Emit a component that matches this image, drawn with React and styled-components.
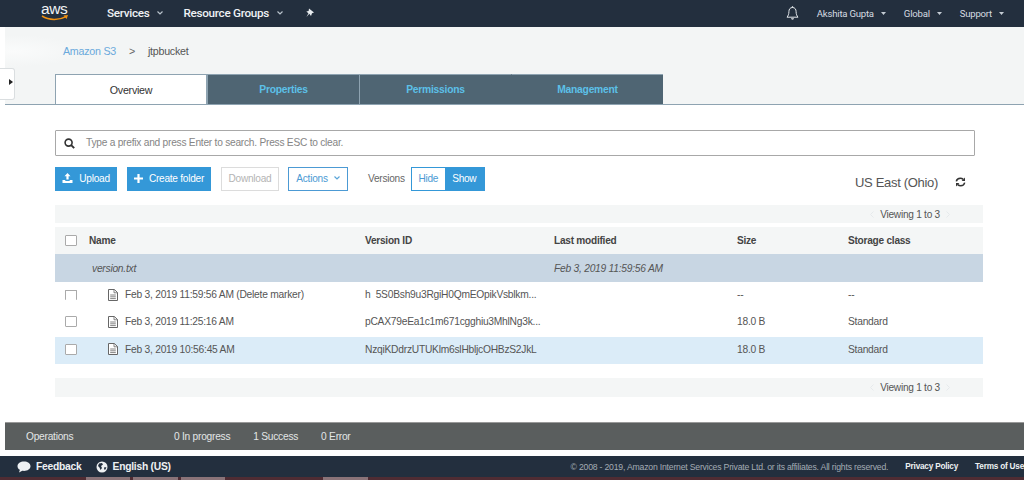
import React from "react";
import styled, { createGlobalStyle } from "styled-components";

const GlobalStyle = createGlobalStyle`
	html, body {
		margin: 0;
		padding: 0;
		background: #fff;
	}
	body {
		font-family: "Liberation Sans", Arial, sans-serif;
		font-size: 10px;
		color: #444;
	}
	/* the source text is narrow for its height, keep that look everywhere */
	* {
		letter-spacing: -0.024em;
	}
`;

const Caret = () => (
	<svg width="5" height="3" viewBox="0 0 5 3">
		<path d="M0 0h5L2.500 3z" fill="#c4ccd4" />
	</svg>
);

const Chevron = ({ color = "#8a98a3" }) => (
	<svg width="6" height="4" viewBox="0 0 6 4">
		<path d="M.5 .5L3 3 5.500 .5" stroke={color} strokeWidth="1.200" fill="none" />
	</svg>
);

const AwsLogo = () => (
	<LogoWrap>
		<LogoText>aws</LogoText>
		<LogoSmile width="28" height="7" viewBox="0 0 28 7">
			<path d="M1 1c7 4.500 17 4.500 24 .6" stroke="#f29111" strokeWidth="1.500" fill="none" />
			<path d="M22.500 .5l4.500-.4-1.400 4z" fill="#f29111" />
		</LogoSmile>
	</LogoWrap>
);

const Pin = () => (
	<svg width="10" height="10" viewBox="0 0 10 10">
		<path d="M4 .5l5 4-2 .7-1 2.800-1.700-2.200L1.500 9 3.400 5.200 1.300 3.600l2.300-.5z" fill="#e8ecef" />
	</svg>
);

const Bell = () => (
	<svg width="13" height="15" viewBox="0 0 13 15">
		<path d="M6.500 1.500c-2.500 0-3.600 1.900-3.600 4.200 0 2.400-.7 4-1.900 5.500h11c-1.200-1.500-1.900-3.100-1.900-5.500 0-2.300-1.100-4.200-3.600-4.200z" stroke="#e4e8ec" strokeWidth="1" fill="none" />
		<path d="M5 12.300h3c0 1.900-3 1.900-3 0z" fill="#e4e8ec" />
		<rect x="5.900" y=".2" width="1.200" height="1.500" fill="#e4e8ec" />
	</svg>
);

const SearchIcon = () => (
	<svg width="11" height="11" viewBox="0 0 11 11">
		<circle cx="4.600" cy="4.600" r="3.500" stroke="#333" strokeWidth="1.600" fill="none" />
		<path d="M7.200 7.200l3 3" stroke="#333" strokeWidth="1.900" />
	</svg>
);

const UploadIcon = () => (
	<svg width="11" height="10" viewBox="0 0 11 10">
		<path d="M5.500 0l3 3.200H6.600v3.300H4.400V3.200H2.500z" fill="#fff" />
		<path d="M.5 7h2.800v1h4.400V7h2.800v3H.5z" fill="#fff" />
	</svg>
);

const PlusIcon = () => (
	<svg width="9" height="9" viewBox="0 0 9 9">
		<path d="M3.400 0h2.200v3.400H9v2.200H5.600V9H3.400V5.600H0V3.400h3.400z" fill="#fff" />
	</svg>
);

const RefreshIcon = () => (
	<svg width="11" height="10" viewBox="0 0 11 10">
		<path d="M1.300 4.300C1.700 2.400 3.300 1.200 5.300 1.200c1.200 0 2.200.5 3 1.200" stroke="#333" strokeWidth="1.500" fill="none" />
		<path d="M10 .4v3.500H6.600z" fill="#333" />
		<path d="M9.700 5.700c-.4 1.900-2 3.100-4 3.100-1.200 0-2.200-.5-3-1.200" stroke="#333" strokeWidth="1.500" fill="none" />
		<path d="M1 9.600V6.100h3.400z" fill="#333" />
	</svg>
);

const FileIcon = () => (
	<svg width="10" height="12" viewBox="0 0 10 12">
		<path d="M.5 .5h5.800l3.200 3v8H.5z" stroke="#666" strokeWidth="1" fill="#fff" />
		<path d="M6 .5v3.300h3.500M2.200 6h5.600M2.200 7.800h5.600M2.200 9.600h5.600" stroke="#666" strokeWidth=".8" fill="none" />
	</svg>
);

const Bubble = () => (
	<svg width="14" height="12" viewBox="0 0 14 12">
		<path d="M7 .5c3.600 0 6.500 2 6.500 4.700S10.600 9.900 7 9.900c-.6 0-1.100 0-1.700-.1L2 11.500l.9-2.700C1.300 8 .5 6.700.5 5.200.5 2.500 3.400.5 7 .5z" fill="#eef1f3" />
	</svg>
);

const Globe = () => (
	<svg width="12" height="12" viewBox="0 0 12 12">
		<circle cx="6" cy="6" r="5.500" fill="#eef1f3" />
		<path d="M3 2.500l3-.5 1 1.500-2 1.500 1 2-1.500 2L3.500 6.500 2 5zM8.500 6l2 .5-1.500 2.500-1-1z" fill="#232f3e" />
	</svg>
);

const PagerArrow = ({ right }) => (
	<svg width="4" height="7" viewBox="0 0 4 7">
		<path d={right ? "M.5 .5l3 3-3 3" : "M3.500 .5l-3 3 3 3"} stroke="#e6eaec" strokeWidth="1" fill="none" />
	</svg>
);

const rows = [
	{ date: "Feb 3, 2019 11:59:56 AM (Delete marker)", version: "h  5S0Bsh9u3RgiH0QmEOpikVsblkm...", size: "--", storage: "--", cut: true },
	{ date: "Feb 3, 2019 11:25:16 AM", version: "pCAX79eEa1c1m671cgghiu3MhlNg3k...", size: "18.0 B", storage: "Standard" },
	{ date: "Feb 3, 2019 10:56:45 AM", version: "NzqiKDdrzUTUKlm6slHbljcOHBzS2JkL", size: "18.0 B", storage: "Standard", selected: true },
];

const App = () => {
	return (
		<>
			<GlobalStyle />
			<Page>
				<TopBar>
					<AwsLogo />
					<NavItem $bold $left={24}>Services <Chevron color="#b8c2cb" /></NavItem>
					<NavItem $bold $left={20}>Resource Groups <Chevron color="#b8c2cb" /></NavItem>
					<PinSlot><Pin /></PinSlot>
					<NavRight>
						<Bell />
						<NavItem $left={18}>Akshita Gupta <Caret /></NavItem>
						<NavItem $left={18}>Global <Caret /></NavItem>
						<NavItem $left={18}>Support <Caret /></NavItem>
					</NavRight>
				</TopBar>
				<Body>
					<Rail>
						<RailTab />
					</Rail>
					<Main>
						<Hero>
							<Crumbs>
								<CrumbLink>Amazon S3</CrumbLink>
								<CrumbSep>&gt;</CrumbSep>
								<span>jtpbucket</span>
							</Crumbs>
							<Tabs>
								<Tab $active>Overview</Tab>
								<Tab>Properties</Tab>
								<Tab>Permissions</Tab>
								<Tab $flush>Management</Tab>
							</Tabs>
						</Hero>
						<Content>
							<SearchBox>
								<SearchIcon />
								<SearchHint>Type a prefix and press Enter to search. Press ESC to clear.</SearchHint>
							</SearchBox>
							<Toolbar>
								<Button $primary $w={62}><UploadIcon /> Upload</Button>
								<Button $primary $w={84}><PlusIcon /> Create folder</Button>
								<Button $disabled $w={58}>Download</Button>
								<Button $outline $w={60} $pull>Actions <Chevron color="#5aa5d8" /></Button>
								<VersionsLabel>Versions</VersionsLabel>
								<Toggle>
									<ToggleSide>Hide</ToggleSide>
									<ToggleSide $on>Show</ToggleSide>
								</Toggle>
								<Region>US East (Ohio)</Region>
								<RefreshSlot><RefreshIcon /></RefreshSlot>
							</Toolbar>
							<Pager>
								<PagerArrow />
								Viewing 1 to 3
								<PagerArrow right />
							</Pager>
							<HeadRow>
								<CheckCell><Check /></CheckCell>
								<NameCell>Name</NameCell>
								<VersionCell>Version ID</VersionCell>
								<ModifiedCell>Last modified</ModifiedCell>
								<SizeCell>Size</SizeCell>
								<StorageCell>Storage class</StorageCell>
							</HeadRow>
							<ObjectRow>
								<CheckCell />
								<NameCell $object>version.txt</NameCell>
								<VersionCell />
								<ModifiedCell>Feb 3, 2019 11:59:56 AM</ModifiedCell>
							</ObjectRow>
							{rows.map((r) => (
								<VersionRow key={r.version} $selected={r.selected}>
									<CheckCell><Check $cut={r.cut} /></CheckCell>
									<NameCell $indent>
										<FileIcon />
										{r.date}
									</NameCell>
									<VersionCell>{r.version}</VersionCell>
									<ModifiedCell />
									<SizeCell>{r.size}</SizeCell>
									<StorageCell>{r.storage}</StorageCell>
								</VersionRow>
							))}
							<Pager $bottom>
								<PagerArrow />
								Viewing 1 to 3
								<PagerArrow right />
							</Pager>
						</Content>
						<Operations>
							<OpsTitle>Operations</OpsTitle>
							<OpsStat>0 In progress</OpsStat>
							<OpsStat>1 Success</OpsStat>
							<OpsStat>0 Error</OpsStat>
						</Operations>
					</Main>
				</Body>
				<Footer>
					<FootLink $first><Bubble /> Feedback</FootLink>
					<FootLink><Globe /> English (US)</FootLink>
					<Legal>© 2008 - 2019, Amazon Internet Services Private Ltd. or its affiliates. All rights reserved.</Legal>
					<FootPolicy>Privacy Policy</FootPolicy>
					<FootPolicy>Terms of Use</FootPolicy>
				</Footer>
				<Taskbar>
					<TaskChip $w={44} $ml={86} />
					<TaskChip $w={45} $ml={3} />
					<TaskChip $w={44} $ml={3} />
					<TaskChip $w={45} $ml={98} />
				</Taskbar>
			</Page>
		</>
	);
};

const Page = styled.div`
	width: 1024px;
	height: 480px;
	overflow: hidden;
	display: flex;
	flex-direction: column;
	background: #fff;
`;
const TopBar = styled.header`
	height: 27px;
	flex: none;
	display: flex;
	align-items: center;
	background: #232f3e;
	padding-left: 41px;
	font-family: "Roboto", "Liberation Sans", sans-serif;
`;
const LogoWrap = styled.div`
	width: 42px;
	height: 27px;
	display: flex;
	flex-direction: column;
`;
const LogoText = styled.span`
	font: 15.5px/18px "Liberation Sans", sans-serif;
	color: #f1f3f5;
	letter-spacing: -0.4px;
`;
const LogoSmile = styled.svg`
	margin-top: -3px;
`;
const NavItem = styled.span`
	display: inline-flex;
	align-items: center;
	gap: ${(p) => (p.$bold ? "8px" : "7px")};
	margin-left: ${(p) => p.$left}px;
	margin-bottom: ${(p) => (p.$bold ? "2px" : "0")};
	font-size: ${(p) => (p.$bold ? "11.7px" : "9.6px")};
	font-weight: ${(p) => (p.$bold ? 500 : 400)};
	color: ${(p) => (p.$bold ? "#eef1f4" : "#d5dbe1")};
	white-space: nowrap;
`;
const PinSlot = styled.span`
	margin-left: 22px;
	margin-bottom: 2px;
	display: flex;
`;
const NavRight = styled.div`
	margin-left: auto;
	padding-right: 20px;
	display: flex;
	align-items: center;
`;
const Body = styled.div`
	height: 423px;
	flex: none;
	display: flex;
`;
const Rail = styled.div`
	width: 5px;
	flex: none;
	box-sizing: border-box;
	background: #fff;
	position: relative;
`;
const RailTab = styled.div`
	position: absolute;
	top: 41px;
	left: 0;
	width: 15px;
	height: 32px;
	box-sizing: border-box;
	background: #fff;
	border: 1px solid #dadee0;
	border-left: 0;
	border-radius: 0 3px 3px 0;
	z-index: 2;

	&::after {
		content: "";
		position: absolute;
		left: 9px;
		top: 10px;
		border-left: 4px solid #222;
		border-top: 3px solid transparent;
		border-bottom: 3px solid transparent;
	}
`;
const Main = styled.div`
	flex: 1;
	min-width: 0;
	display: flex;
	flex-direction: column;
`;
const Hero = styled.div`
	height: 78px;
	flex: none;
	box-sizing: border-box;
	padding-left: 50px;
	background: radial-gradient(ellipse 70px 16px at 8px 24px, #fafbfb, #f3f5f5);
	border-bottom: 1px solid #8ea3b1;
	display: flex;
	flex-direction: column;
`;
const Crumbs = styled.div`
	height: 48px;
	box-sizing: border-box;
	padding: 18px 0 0 8px;
	display: flex;
	font-size: 10.7px;
	line-height: 12px;
	color: #555;
`;
const CrumbLink = styled.span`
	color: #6aa9dc;
`;
const CrumbSep = styled.span`
	margin: 0 13px;
	color: #666;
`;
const Tabs = styled.div`
	display: flex;
	height: 30px;
`;
const Tab = styled.div`
	width: 152px;
	height: 30px;
	box-sizing: border-box;
	display: flex;
	align-items: center;
	justify-content: center;
	font-size: ${(p) => (p.$active ? "10.7px" : "10.300px")};
	font-weight: ${(p) => (p.$active ? 400 : 700)};
	color: ${(p) => (p.$active ? "#333" : "#5cc0e8")};
	background: ${(p) => (p.$active ? "#fff" : "#4f6573")};
	border-top: 1px solid #8ea3b1;
	border-left: 1px solid ${(p) => (p.$flush ? "#4f6573" : "#8ea3b1")};
	border-right: ${(p) => (p.$active ? "1px solid #8ea3b1" : "0")};
`;
const Content = styled.div`
	flex: 1;
	min-height: 0;
	box-sizing: border-box;
	padding: 25px 41px 0 50px;
	background: #fff;
`;
const SearchBox = styled.div`
	width: 920px;
	height: 26px;
	box-sizing: border-box;
	border: 1px solid #a8a8a8;
	border-radius: 1px;
	display: flex;
	align-items: center;
	padding-left: 8px;
`;
const SearchHint = styled.span`
	margin-left: 11px;
	margin-bottom: 2px;
	font-size: 10.2px;
	color: #858585;
`;
const Toolbar = styled.div`
	margin-top: 11px;
	height: 24px;
	width: 922px;
	display: flex;
	align-items: center;
	gap: 10px;
`;
const Button = styled.div`
	width: ${(p) => p.$w}px;
	height: 24px;
	margin-left: ${(p) => (p.$pull ? "-1px" : "0")};
	padding-bottom: 2px;
	box-sizing: border-box;
	display: flex;
	align-items: center;
	justify-content: center;
	gap: 6px;
	font-size: 10.1px;
	color: ${(p) => (p.$primary ? "#fff" : p.$disabled ? "#b4b4b4" : "#4c9ad4")};
	background: ${(p) => (p.$primary ? "#3498d8" : "#fff")};
	border: 1px solid ${(p) => (p.$primary ? "#3498d8" : p.$disabled ? "#dcdcdc" : "#4c9ad4")};
`;
const VersionsLabel = styled.span`
	margin-left: 10px;
	margin-right: -4px;
	margin-bottom: 2px;
	font-size: 10.1px;
	color: #666;
`;
const Toggle = styled.div`
	display: flex;
	height: 24px;
	width: 74px;
	box-sizing: border-box;
	border: 1px solid #3498d8;
`;
const ToggleSide = styled.div`
	flex: ${(p) => (p.$on ? "0 0 39px" : "0 0 33px")};
	padding-bottom: 2px;
	box-sizing: border-box;
	display: flex;
	align-items: center;
	justify-content: center;
	font-size: 10.1px;
	color: ${(p) => (p.$on ? "#fff" : "#4c9ad4")};
	background: ${(p) => (p.$on ? "#3498d8" : "#fff")};
`;
const Region = styled.span`
	margin-left: auto;
	padding-top: 6px;
	font-size: 13px;
	color: #555;
`;
const RefreshSlot = styled.span`
	margin-left: 7px;
	width: 22px;
	display: flex;
	padding-top: 6px;
`;
const Pager = styled.div`
	width: 928px;
	height: ${(p) => (p.$bottom ? "19px" : "18px")};
	margin-top: 14px;
	box-sizing: border-box;
	padding-right: 33px;
	display: flex;
	align-items: center;
	justify-content: flex-end;
	gap: 6px;
	background: #f4f6f6;
	font-size: 10.1px;
	color: #555;
`;
const Row = styled.div`
	width: 928px;
	display: flex;
	align-items: center;
	font-size: 10.25px;
`;
const HeadRow = styled(Row)`
	height: 27px;
	margin-top: 4px;
	background: #f4f6f6;
	font-weight: 700;
	font-size: 10.1px;
	color: #444;
`;
const ObjectRow = styled(Row)`
	height: 28px;
	background: #c8d6e3;
	font-style: italic;
	color: #555;
`;
const CheckCell = styled.div`
	width: 34px;
	flex: none;
	display: flex;
	padding-left: 10px;
	box-sizing: border-box;
`;
const VersionRow = styled(Row)`
	height: 27.330px;
	padding-bottom: 2px;
	box-sizing: border-box;
	background: ${(p) => (p.$selected ? "#dbecf8" : "#fff")};
	color: #555;

	${CheckCell} {
		margin-bottom: 0;
	}
`;
const Check = styled.span`
	width: 12px;
	height: ${(p) => (p.$cut ? "10px" : "11px")};
	box-sizing: border-box;
	border: 1px solid #aaa;
	border-bottom-width: ${(p) => (p.$cut ? "0" : "1px")};
	border-radius: 1px;
	background: #fff;
`;
const NameCell = styled.div`
	width: 276px;
	flex: none;
	box-sizing: border-box;
	padding-left: ${(p) => (p.$indent ? "19px" : p.$object ? "3px" : "0")};
	display: flex;
	align-items: center;
	gap: 7px;
	white-space: nowrap;
`;
const VersionCell = styled.div`
	width: 189px;
	flex: none;
	white-space: pre;
`;
const ModifiedCell = styled.div`
	width: 183px;
	flex: none;
	white-space: nowrap;
`;
const SizeCell = styled.div`
	width: 111px;
	flex: none;
`;
const StorageCell = styled.div`
	flex: 1;
`;
const Operations = styled.div`
	height: 28px;
	flex: none;
	box-sizing: border-box;
	display: flex;
	align-items: center;
	padding-left: 21px;
	background: #5a5e5e;
	border-top: 1px solid #999;
	font-size: 10.2px;
	color: #e3e6e6;
`;
const OpsTitle = styled.span`
	width: 148px;
`;
const OpsStat = styled.span`
	margin-right: 23px;
`;
const Footer = styled.footer`
	margin-top: 6px;
	height: 21px;
	flex: none;
	display: flex;
	align-items: center;
	background: #232f3e;
	font-size: 10.3px;
	overflow: hidden;
	white-space: nowrap;
`;
const FootLink = styled.span`
	display: inline-flex;
	align-items: center;
	gap: 5px;
	margin-left: ${(p) => (p.$first ? "17px" : "14px")};
	font-weight: 700;
	color: #eef1f3;
`;
const Legal = styled.span`
	margin-left: auto;
	font-size: 8.700px;
	color: #a4acb4;
`;
const FootPolicy = styled.span`
	margin-left: 17px;
	font-size: 8.200px;
	font-weight: 700;
	color: #eef1f3;
`;
const Taskbar = styled.div`
	height: 3px;
	flex: none;
	display: flex;
	background: #4f2c33;
`;
const TaskChip = styled.span`
	width: ${(p) => p.$w}px;
	margin-left: ${(p) => p.$ml}px;
	background: #8a7378;
`;

export default App;
